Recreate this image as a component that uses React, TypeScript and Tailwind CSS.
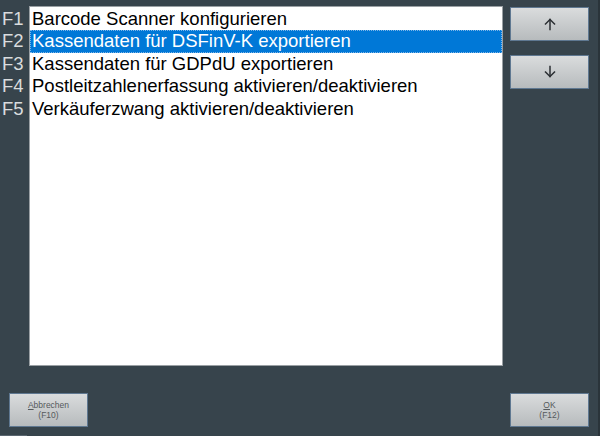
import React from "react";

const items = [
  "Barcode Scanner konfigurieren",
  "Kassendaten für DSFinV-K exportieren",
  "Kassendaten für GDPdU exportieren",
  "Postleitzahlenerfassung aktivieren/deaktivieren",
  "Verkäuferzwang aktivieren/deaktivieren",
];

function Btn({ children, className = "" }: { children: React.ReactNode; className?: string }) {
  return (
    <div
      className={
        "w-[79px] h-[34px] border border-[#5f7891] bg-gradient-to-b from-[#dadcdd] to-[#b7bbbd] flex flex-col items-center justify-center " +
        className
      }
    >
      {children}
    </div>
  );
}

function Arrow({ up }: { up: boolean }) {
  return (
    <svg width="14" height="14" viewBox="0 0 14 14" fill="none" stroke="#2b2f33" strokeWidth="1.5" strokeLinecap="square">
      {up ? (
        <>
          <path d="M7 2.5V12.5" />
          <path d="M2.5 7L7 2.5L11.5 7" />
        </>
      ) : (
        <>
          <path d="M7 1.5V11.5" />
          <path d="M2.5 7L7 11.5L11.5 7" />
        </>
      )}
    </svg>
  );
}

export default function App() {
  return (
    <div
      className="w-[600px] h-[436px] bg-[#37444c] relative overflow-hidden flex flex-col"
      style={{ fontFamily: '"Liberation Sans", Arial, sans-serif' }}
    >
      <div className="flex pt-[6px]">
        <div className="w-[29px] pt-[2px] flex flex-col">
          {items.map((_, i) => (
            <div key={i} className="h-[22.4px] leading-[22px] text-[18.5px] text-[#d9dcde] pl-[2px]">
              F{i + 1}
            </div>
          ))}
        </div>
        <div className="w-[474px] h-[360px] bg-white border border-[#9aa0a4] pt-[1px]">
          {items.map((t, i) => (
            <div
              key={i}
              className={
                "h-[22.4px] text-[18.5px] whitespace-nowrap " +
                (i === 1
                  ? "bg-[#0078d7] text-white border border-dotted border-[#7fb6e8] leading-[20px] pl-[1px]"
                  : "text-black leading-[22px] pl-[2px]")
              }
            >
              {t}
            </div>
          ))}
        </div>
        <div className="ml-[7px] flex flex-col gap-[14px] pt-[1px]">
          <Btn>
            <Arrow up />
          </Btn>
          <Btn>
            <Arrow up={false} />
          </Btn>
        </div>
      </div>
      <div className="flex justify-between pl-[9px] pr-[11px] mt-[27px]">
        <Btn>
          <span className="text-[8.5px] leading-[10px] text-[#55595c]">
            <span className="underline">A</span>bbrechen
          </span>
          <span className="text-[8.5px] leading-[10px] text-[#55595c]">(F10)</span>
        </Btn>
        <Btn>
          <span className="text-[8.5px] leading-[10px] text-[#55595c]">
            <span className="underline">O</span>K
          </span>
          <span className="text-[8.5px] leading-[10px] text-[#55595c]">(F12)</span>
        </Btn>
      </div>
      <div className="absolute right-0 top-0 w-[2px] h-full bg-[#2a343a]" />
      <div className="absolute left-0 bottom-0 w-[27px] h-[1px] bg-[#5a6670]" />
    </div>
  );
}
